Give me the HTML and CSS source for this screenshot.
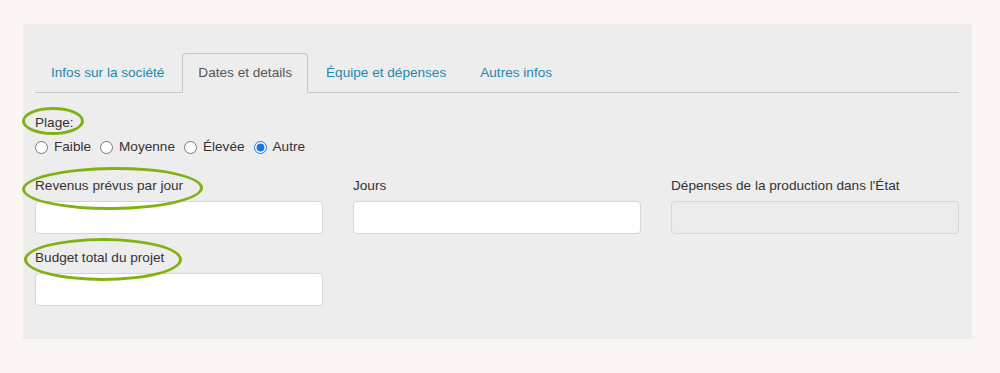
FILE: index.html
```html
<!DOCTYPE html>
<html lang="fr">
<head>
  <meta charset="UTF-8">
  <title>Dates et details</title>
  <link rel="stylesheet" href="styles.css">
</head>
<body>
<div class="panel">
  <ul class="tabs">
    <li><a href="#">Infos sur la société</a></li>
    <li class="active"><a href="#">Dates et details</a></li>
    <li><a href="#">Équipe et dépenses</a></li>
    <li><a href="#">Autres infos</a></li>
  </ul>

  <div class="tab-content">
    <div class="form-group plage">
      <label class="field-label"><span class="marked">Plage:<span class="ring ring-plage"></span></span></label>
      <div class="radios">
        <label class="radio"><input type="radio" name="plage"> Faible</label>
        <label class="radio"><input type="radio" name="plage"> Moyenne</label>
        <label class="radio"><input type="radio" name="plage"> Élevée</label>
        <label class="radio"><input type="radio" name="plage" checked> Autre</label>
      </div>
    </div>

    <div class="row">
      <div class="form-group">
        <label class="field-label"><span class="marked">Revenus prévus par jour<span class="ring ring-revenus"></span></span></label>
        <input type="text" class="form-control">
      </div>
      <div class="form-group">
        <label class="field-label">Jours</label>
        <input type="text" class="form-control">
      </div>
      <div class="form-group">
        <label class="field-label">Dépenses de la production dans l'État</label>
        <input type="text" class="form-control" disabled>
      </div>
    </div>

    <div class="row last">
      <div class="form-group">
        <label class="field-label"><span class="marked">Budget total du projet<span class="ring ring-budget"></span></span></label>
        <input type="text" class="form-control">
      </div>
    </div>
  </div>
</div>
</body>
</html>
```

FILE: styles.css
```css
body {
  margin: 0;
  padding: 24px 28px 34px 23px;
  background: #fbf5f4;
  font-family: 'Liberation Sans', Arial, sans-serif;
  font-size: 13.6px;
  line-height: 20px;
  color: #333;
}
.panel {
  background: #ededed;
  padding: 29px 13px 33px 12px;
}

/* Tabs */
.tabs {
  display: flex;
  list-style: none;
  margin: 0;
  padding: 0;
  border-bottom: 1px solid #c6c6c6;
}
.tabs li {
  margin-bottom: -1px;
}
.tabs a {
  display: block;
  padding: 9px 15px;
  margin-right: 2px;
  border: 1px solid transparent;
  border-radius: 4px 4px 0 0;
  color: #1e88ad;
  text-decoration: none;
}
.tabs .active a {
  color: #555;
  background: #ededed;
  border-color: #c6c6c6;
  border-bottom-color: transparent;
}

/* Form */
.tab-content {
  padding-top: 20px;
}
.field-label {
  display: block;
  margin-bottom: 5px;
}
.plage {
  margin-bottom: 19px;
}
.plage .field-label {
  margin-bottom: 4px;
}
.radios {
  display: flex;
  gap: 9px;
}
.radio {
  display: inline-flex;
  align-items: center;
  gap: 6px;
}
.radio input {
  margin: 0;
  width: 13px;
  height: 13px;
  accent-color: #1a73e8;
}
.row {
  display: grid;
  grid-template-columns: repeat(3, 1fr);
  column-gap: 30px;
  margin-bottom: 14px;
}
.row.last {
  margin-bottom: 0;
}
.form-control {
  display: block;
  box-sizing: border-box;
  width: 100%;
  height: 33px;
  margin: 0;
  padding: 6px 12px;
  background: #fff;
  border: 1px solid #d6d6d6;
  border-radius: 4px;
  font: inherit;
}
.form-control:disabled {
  background: #ececec;
}

/* Hand-drawn highlight rings */
.marked {
  position: relative;
  display: inline-block;
}
.ring {
  position: absolute;
  box-sizing: border-box;
  border: 3px solid #80b214;
  border-radius: 50%;
  pointer-events: none;
}
.ring-plage {
  left: -13px;
  top: -6px;
  width: 62px;
  height: 28px;
}
.ring-revenus {
  left: -13px;
  top: -9px;
  width: 181px;
  height: 43px;
  transform: rotate(-0.5deg);
}
.ring-budget {
  left: -11px;
  top: -10px;
  width: 158px;
  height: 43px;
}
```
